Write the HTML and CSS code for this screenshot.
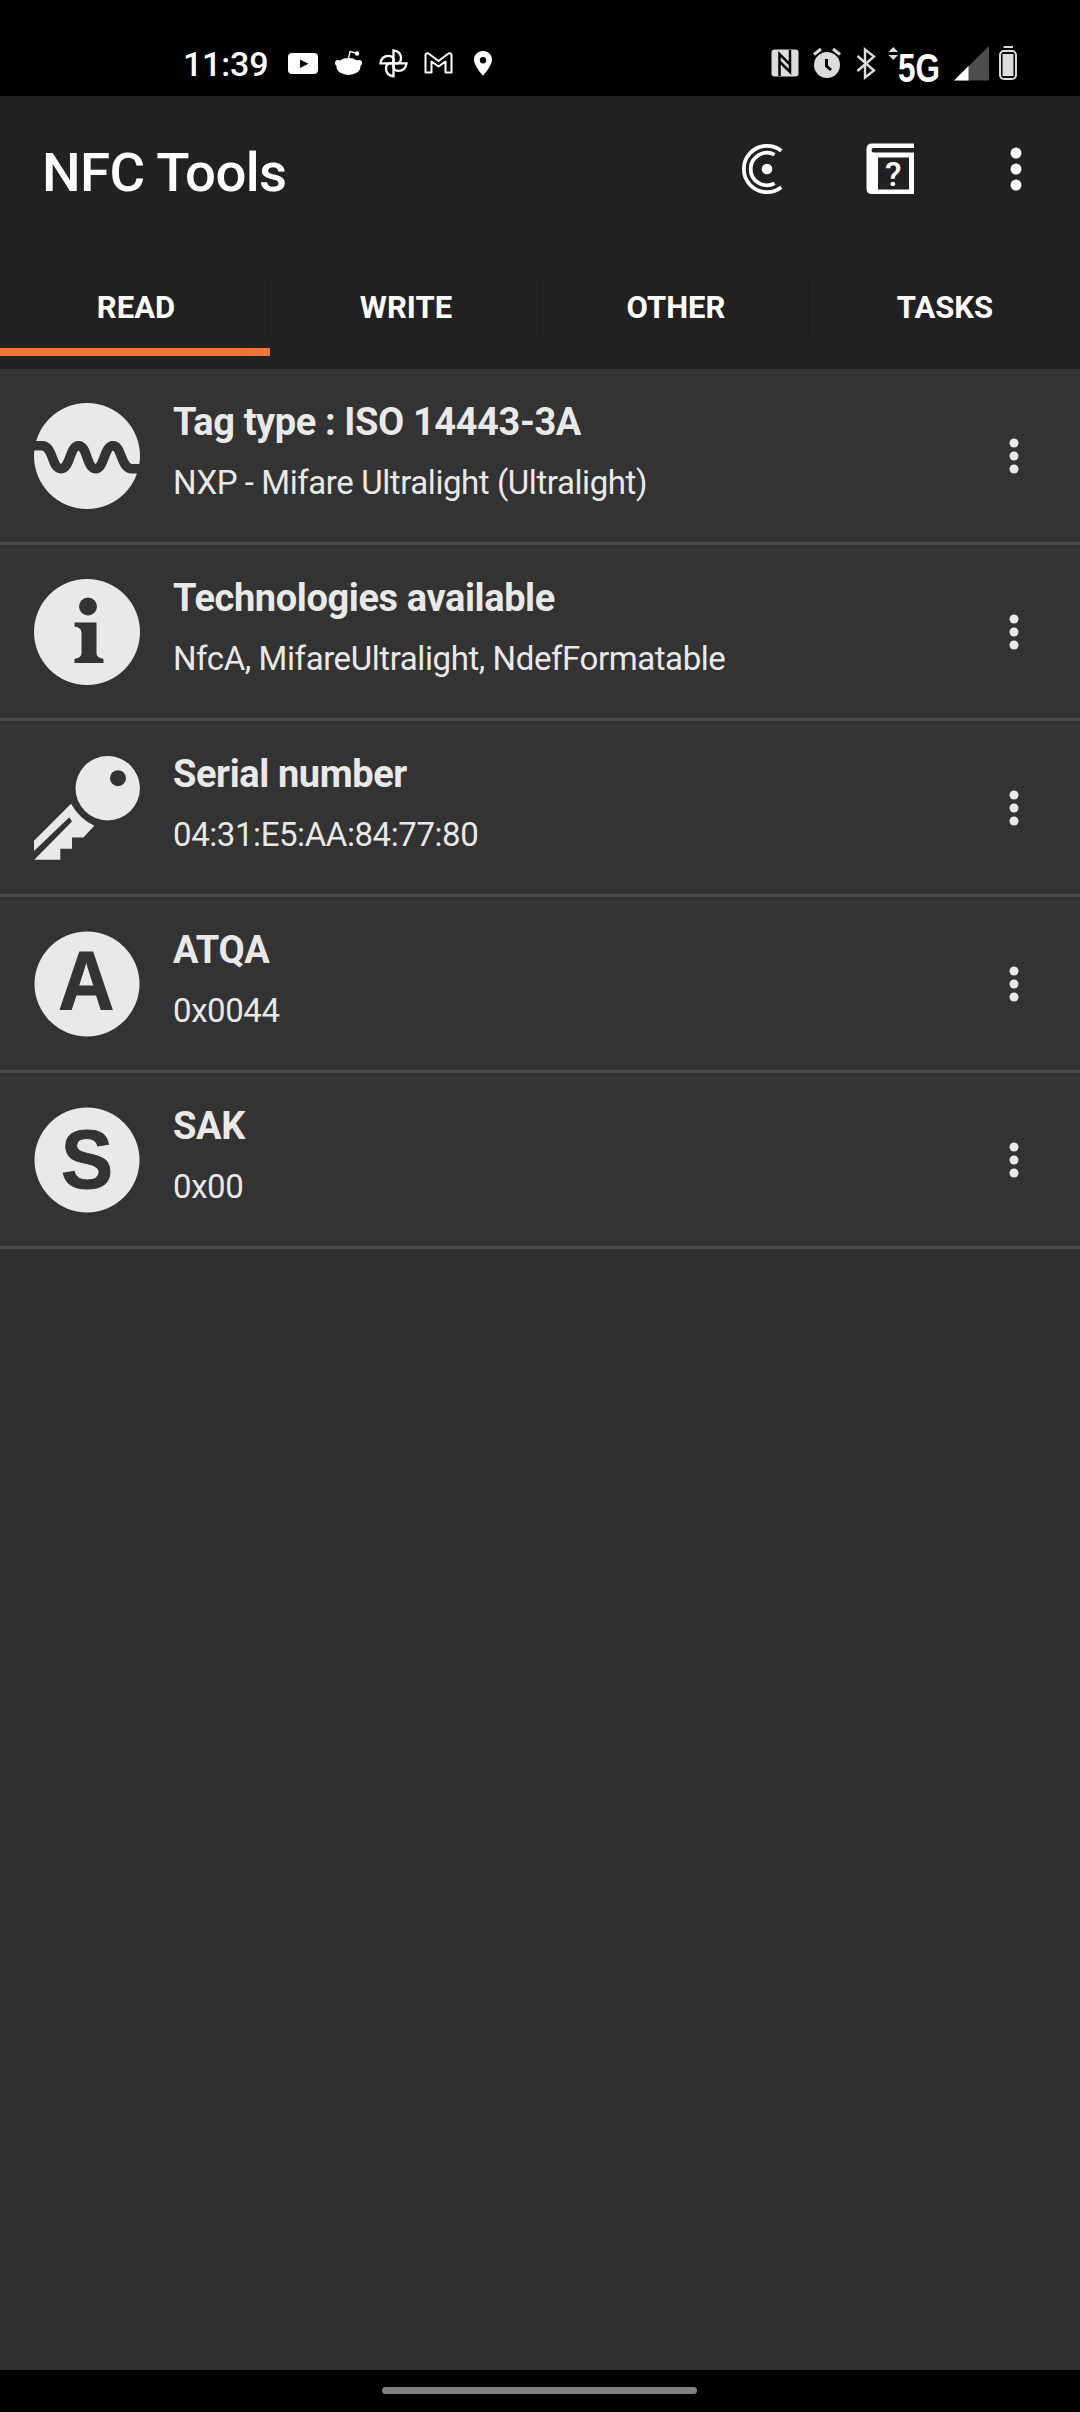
FILE: index.html
```html
<!DOCTYPE html>
<html lang="en">
<head>
  <meta charset="UTF-8">
  <meta name="viewport" content="width=device-width, initial-scale=1">
  <title>NFC Tools</title>
  <link rel="stylesheet" href="styles.css">
</head>
<body>
  <div class="screen">
    <!-- Status bar -->
    <div class="status-bar">
      <span class="clock">11:39</span>
      <svg class="status-left" width="210" height="40" viewBox="284 44 210 40">
        <path fill="#fff" d="M292 53h22q4 0 4 4v13q0 4-4 4h-22q-4 0-4-4v-13q0-4 4-4z"/>
        <path d="M300 59.500l8.500 4.200-8.500 4.200z"/>
        <g fill="#fff">
          <ellipse cx="348.500" cy="66.500" rx="12" ry="8.500"/>
          <circle cx="338" cy="63" r="3"/>
          <circle cx="359" cy="63" r="3"/>
          <circle cx="357" cy="53.500" r="2.200"/>
          <path fill="none" stroke="#fff" stroke-width="1.300" d="M348.500 59l1.500-7.500 6 1.500"/>
        </g>
        <g fill="none" stroke="#fff" stroke-width="2.300">
          <path d="M393.500 63.300v-13q7.500 1 7.500 8 0 4-3 5z"/>
          <path d="M393.500 63.300h13q-1 7.500-8 7.500-4 0-5-3z"/>
          <path d="M393.500 63.300v13q-7.500-1-7.500-8 0-4 3-5z"/>
          <path d="M393.500 63.300h-13q1-7.500 8-7.500 4 0 5 3z"/>
        </g>
        <path fill="none" stroke="#fff" stroke-width="2" stroke-linejoin="round" d="M425.500 72.500v-17q0-3 3-2l10 7.500 10-7.500q3-1 3 2v17h-6v-11l-7 5-7-5v11z"/>
        <path fill="#fff" fill-rule="evenodd" d="M483 51c5.200 0 9 3.900 9 8.800 0 6-9 16-9 16s-9-10-9-16c0-4.900 3.800-8.800 9-8.800zm0 6a3.200 3.200 0 1 0 0 6.400 3.200 3.200 0 0 0 0-6.400z"/>
      </svg>
      <svg class="status-right" width="250" height="50" viewBox="770 44 250 50">
        <rect x="771.500" y="49.500" width="27" height="27" rx="3" fill="#dcdcdc"/>
        <path fill="none" stroke="#000" stroke-width="2.500" d="M779.500 76v-22l10.500 10.500v6M790 50v22l-10-10"/>
        <g fill="#dcdcdc">
          <circle cx="827" cy="65" r="13"/>
          <path fill="none" stroke="#dcdcdc" stroke-width="3" d="M814 54.500l7-5.500M833 49l7 5.500"/>
        </g>
        <path fill="none" stroke="#000" stroke-width="3" d="M826.500 59v7l4.500 4"/>
        <path fill="none" stroke="#dcdcdc" stroke-width="2.400" d="M857.500 56l16.500 14.500-9 7v-28l9 7-16.500 14.500"/>
        <path fill="#dcdcdc" d="M888.500 52l4.800-5 4.800 5zM888.500 55h9.600l-4.800 5z"/>
        <text class="network" x="898" y="81.500" textLength="42" lengthAdjust="spacingAndGlyphs">5G</text>
        <path fill="#4d4d4d" d="M954 80.500l35-34.500v33q0 1.500-1.500 1.500z"/>
        <path fill="#fff" d="M954 80.500l14.500-14.500v14.500z"/>
        <rect x="1000" y="51" width="16" height="28" rx="4" fill="none" stroke="#dcdcdc" stroke-width="2"/>
        <path fill="#dcdcdc" d="M1003.500 46h9.500v2h-9.500zM1002.500 54h11v22h-11z"/>
      </svg>
    </div>

    <!-- App bar -->
    <header class="app-bar">
      <h1 class="app-title">NFC Tools</h1>
      <div class="actions">
        <svg class="action" width="44" height="52" viewBox="0 0 44 52">
          <g fill="none" stroke="#fff" stroke-width="3.800">
            <path d="M40.300 7.700A23.200 23.200 0 1 0 40.300 44.300"/>
            <path d="M33.600 11.600A16.300 16.300 0 1 0 33.600 40.400"/>
          </g>
          <circle cx="26" cy="26" r="5.300" fill="#fff"/>
        </svg>
        <svg class="action" width="50" height="52" viewBox="0 0 50 52">
          <path fill="#fff" fill-rule="evenodd" d="M6 .500h42v4.500H8q-2.500 0-2.500 2.200t2.500 2.200h40v41.600H6Q.500 51 .500 45.500v-39.500Q.500.500 6 .500zM12 14.500v32h31v-32z"/>
          <text class="help" x="27.300" y="42.500">?</text>
        </svg>
        <svg class="action overflow" width="12" height="44" viewBox="0 0 12 44">
          <g fill="#fff"><circle cx="6" cy="6" r="5.500"/><circle cx="6" cy="22" r="5.500"/><circle cx="6" cy="38" r="5.500"/></g>
        </svg>
      </div>
    </header>

    <nav class="tabs">
      <a class="tab active"><span>READ</span></a>
      <a class="tab"><span>WRITE</span></a>
      <a class="tab"><span>OTHER</span></a>
      <a class="tab"><span>TASKS</span></a>
    </nav>

    <!-- Tag information -->
    <ul class="tag-list">
      <li class="row">
        <svg class="row-icon" viewBox="0 0 106 106">
          <circle cx="53" cy="53" r="53"/>
          <path class="cut-line" d="M-2 42.700H8C19.500 42.700 17.500 65.700 27 65.700S35.500 42.700 44.500 42.700 52.500 65.700 61.500 65.700 70 42.700 79 42.700 86.500 65.700 98 65.700H108"/>
        </svg>
        <div class="row-text">
          <h2>Tag type : ISO 14443-3A</h2>
          <p>NXP - Mifare Ultralight (Ultralight)</p>
        </div>
        <svg class="more" viewBox="0 0 10 36"><circle cx="5" cy="5" r="4.500"/><circle cx="5" cy="18" r="4.500"/><circle cx="5" cy="31" r="4.500"/></svg>
      </li>
      <li class="row">
        <svg class="row-icon" viewBox="0 0 106 106">
          <circle cx="53" cy="53" r="53"/>
          <circle class="cut" cx="54" cy="27.500" r="9"/>
          <path class="cut" d="M40.500 43.500h22v31q0 4 7 5.500v4h-29v-4q7-1.500 7-5.500v-21q0-5-7-6z"/>
        </svg>
        <div class="row-text">
          <h2>Technologies available</h2>
          <p>NfcA, MifareUltralight, NdefFormatable</p>
        </div>
        <svg class="more" viewBox="0 0 10 36"><circle cx="5" cy="5" r="4.500"/><circle cx="5" cy="18" r="4.500"/><circle cx="5" cy="31" r="4.500"/></svg>
      </li>
      <li class="row">
        <svg class="row-icon" viewBox="0 0 106 106">
          <circle cx="73.700" cy="33.200" r="32.200"/>
          <circle class="cut" cx="84" cy="23.200" r="8"/>
          <path d="M37 48.800q8.500 15 23.300 22l-11 11.700H38v11.300H26.300v11H.300L38 66.500l-2.700-4.300L-.500 96.500V86.200z"/>
        </svg>
        <div class="row-text">
          <h2>Serial number</h2>
          <p>04:31:E5:AA:84:77:80</p>
        </div>
        <svg class="more" viewBox="0 0 10 36"><circle cx="5" cy="5" r="4.500"/><circle cx="5" cy="18" r="4.500"/><circle cx="5" cy="31" r="4.500"/></svg>
      </li>
      <li class="row">
        <svg class="row-icon" viewBox="0 0 106 106">
          <circle cx="53" cy="53" r="52.500"/>
          <text class="letter" x="52.300" y="78.500" textLength="56" lengthAdjust="spacingAndGlyphs">A</text>
        </svg>
        <div class="row-text">
          <h2>ATQA</h2>
          <p>0x0044</p>
        </div>
        <svg class="more" viewBox="0 0 10 36"><circle cx="5" cy="5" r="4.500"/><circle cx="5" cy="18" r="4.500"/><circle cx="5" cy="31" r="4.500"/></svg>
      </li>
      <li class="row">
        <svg class="row-icon" viewBox="0 0 106 106">
          <circle cx="53" cy="53" r="52.500"/>
          <text class="letter" x="53" y="81" textLength="52" lengthAdjust="spacingAndGlyphs">S</text>
        </svg>
        <div class="row-text">
          <h2>SAK</h2>
          <p>0x00</p>
        </div>
        <svg class="more" viewBox="0 0 10 36"><circle cx="5" cy="5" r="4.500"/><circle cx="5" cy="18" r="4.500"/><circle cx="5" cy="31" r="4.500"/></svg>
      </li>
    </ul>

    <!-- Gesture bar -->
    <div class="gesture-bar"><div class="pill"></div></div>
  </div>
</body>
</html>
```
FILE: styles.css
```css
* {
  box-sizing: border-box;
}
body {
  margin: 0;
  font-family: Roboto, sans-serif;
  background: #303030;
  color: #fff;
}
h1, h2, p, ul {
  margin: 0;
  padding: 0;
}
svg {
  display: block;
  flex: none;
}
.screen {
  display: flex;
  flex-direction: column;
  width: 1080px;
  height: 2412px;
  overflow: hidden;
}

/* Status bar */
.status-bar {
  display: flex;
  align-items: flex-start;
  height: 96px;
  padding: 44px 60px 0 183px;
  background: #000;
}
.clock {
  width: 101px;
  font-size: 34px;
  font-weight: 500;
  line-height: 40px;
  letter-spacing: -0.2px;
  white-space: nowrap;
}
.status-right {
  margin-left: auto;
}
.network {
  font: bold 40px "Liberation Sans", sans-serif;
  fill: #fff;
}

/* App bar */
.app-bar {
  display: flex;
  justify-content: space-between;
  height: 154px;
  padding: 0 58px 0 42px;
  background: #212121;
}
.app-title {
  margin-top: 44px;
  font-size: 54.500px;
  font-weight: 500;
  line-height: 64px;
  letter-spacing: -0.6px;
}
.actions {
  display: flex;
  align-items: center;
  height: 145px;
}
.action {
  margin-left: 81px;
}
.action.overflow {
  margin-left: 94px;
}
.help {
  font: 500 34px Roboto, sans-serif;
  fill: #fff;
  text-anchor: middle;
}
.tabs {
  display: flex;
  height: 119px;
  background: #212121;
}
.tab {
  flex: 1;
  height: 106px;
  padding-top: 24px;
  font-size: 31px;
  font-weight: 700;
  text-align: center;
}
.tab span {
  display: block;
  height: 64px;
  padding-left: 4px;
  line-height: 68px;
  border-right: 2px solid #1e1e1e;
}
.tab:last-child span {
  padding-left: 0;
  border-right: none;
}
.tab.active {
  border-bottom: 8px solid #f87437;
}

/* Tag information */
.tag-list {
  flex: 1;
  list-style: none;
}
.row {
  display: flex;
  align-items: center;
  height: 176px;
  padding: 0 61px 0 34px;
  background: #333;
  border-bottom: 3px solid #4a4a4a;
}
.row-icon {
  width: 106px;
  height: 106px;
  fill: #e9e9e9;
}
.cut, .letter {
  fill: #333;
}
.cut-line {
  fill: none;
  stroke: #333;
  stroke-width: 9.500;
}
.letter {
  font: bold 83px "Liberation Sans", sans-serif;
  text-anchor: middle;
  stroke: #333;
  stroke-width: 1px;
}
.row-text {
  flex: 1;
  height: 173px;
  padding: 28px 0 0 33px;
  color: #e9e9e9;
}
.row-text h2 {
  font-size: 38px;
  font-weight: 700;
  line-height: 50px;
  letter-spacing: -0.4px;
}
.row-text p {
  margin-top: 13px;
  font-size: 33px;
  line-height: 45px;
  letter-spacing: -0.42px;
}
.more {
  width: 10px;
  height: 36px;
  fill: #e9e9e9;
}

.gesture-bar {
  display: flex;
  justify-content: center;
  height: 42px;
  padding: 17px 2px 0 0;
  background: #000;
}
.pill {
  width: 315px;
  height: 7px;
  border-radius: 4px;
  background: #808080;
}
```
